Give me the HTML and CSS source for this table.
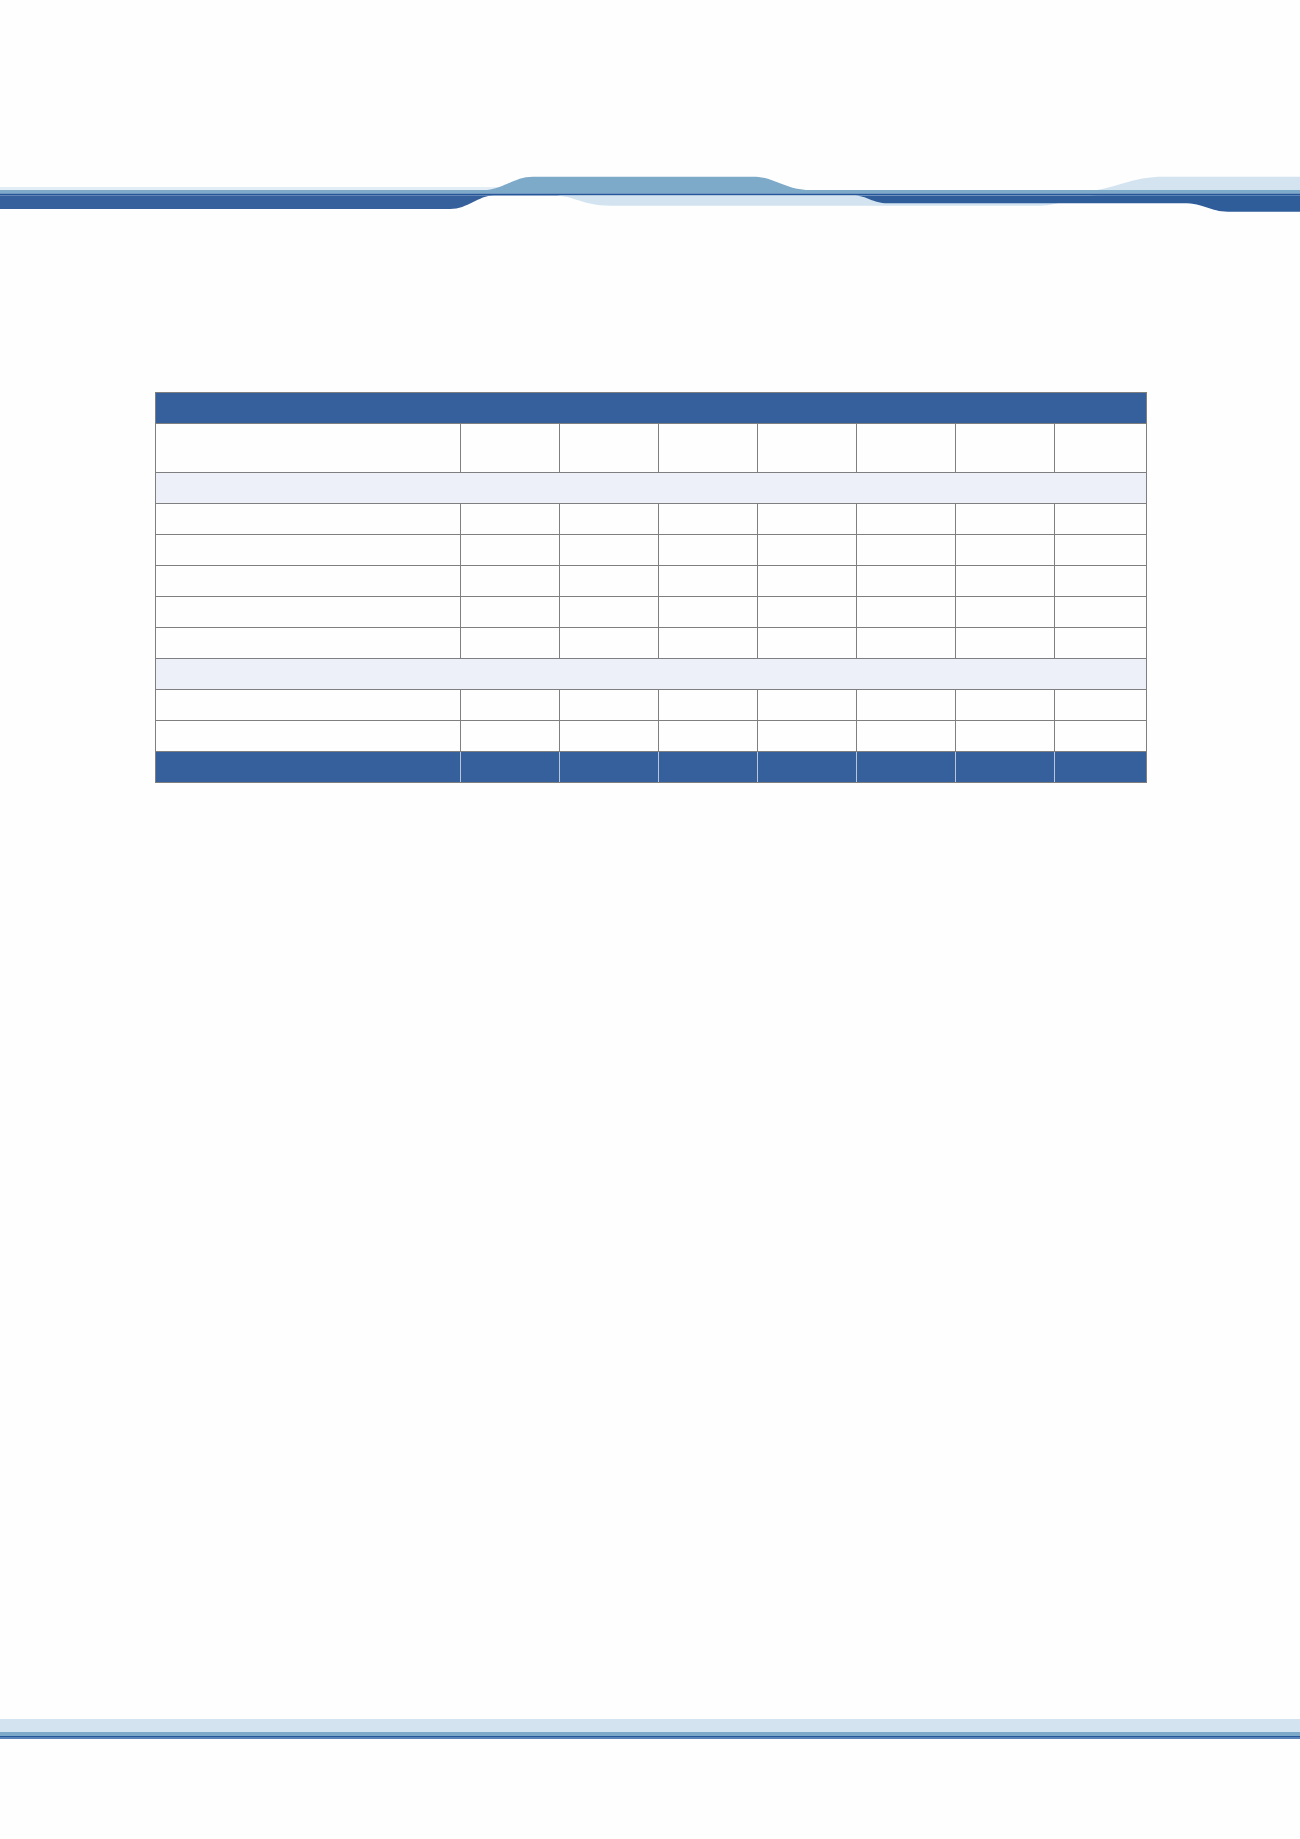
FILE: index.html
```html
<!DOCTYPE html>
<html lang="en">
<head>
<meta charset="utf-8">
<title>Report</title>
<link rel="stylesheet" href="styles.css">
</head>
<body>
<div class="page">
  <header class="masthead">
    <svg class="waves" width="1300" height="42" viewBox="0 0 1300 42" xmlns="http://www.w3.org/2000/svg">
      <rect x="0" y="15" width="520" height="3.5" fill="#e3edf5"/>
      <path d="M1097,18 C1120,14 1135,4.7 1163,4.7 H1300 V18 Z" fill="#d3e4f0"/>
      <path d="M0,18 H487 C505,16 515,4.7 533,4.7 H753 C775,4.7 785,18 810,18 H1300 V21.5 H0 Z" fill="#7eaaca"/>
      <rect x="0" y="21.5" width="1300" height="2" fill="#245799"/>
      <path d="M553,23.5 C575,23.5 582,33.7 610,33.7 H1040 C1060,33.7 1075,23.5 1097,23.5 Z" fill="#d3e4f0"/>
      <path d="M0,23.5 H494 C478,23.5 468,37 450,37 H0 Z" fill="#35609b"/>
      <path d="M853,23.5 C868,23.5 872,31.3 888,31.3 H1183 C1205,31.3 1210,39.7 1228,39.7 H1300 V23.5 Z" fill="#2f5d9a"/>
    </svg>
  </header>

  <main class="content">
    <table class="report">
      <colgroup>
        <col class="c-label">
        <col class="c-num"><col class="c-num"><col class="c-num"><col class="c-num"><col class="c-num"><col class="c-num">
        <col class="c-last">
      </colgroup>
      <tr class="r-title"><td colspan="8"></td></tr>
      <tr class="r-head"><td></td><td></td><td></td><td></td><td></td><td></td><td></td><td></td></tr>
      <tr class="r-section"><td colspan="8"></td></tr>
      <tr class="r-data"><td></td><td></td><td></td><td></td><td></td><td></td><td></td><td></td></tr>
      <tr class="r-data"><td></td><td></td><td></td><td></td><td></td><td></td><td></td><td></td></tr>
      <tr class="r-data"><td></td><td></td><td></td><td></td><td></td><td></td><td></td><td></td></tr>
      <tr class="r-data"><td></td><td></td><td></td><td></td><td></td><td></td><td></td><td></td></tr>
      <tr class="r-data"><td></td><td></td><td></td><td></td><td></td><td></td><td></td><td></td></tr>
      <tr class="r-section"><td colspan="8"></td></tr>
      <tr class="r-data"><td></td><td></td><td></td><td></td><td></td><td></td><td></td><td></td></tr>
      <tr class="r-data"><td></td><td></td><td></td><td></td><td></td><td></td><td></td><td></td></tr>
      <tr class="r-total"><td></td><td></td><td></td><td></td><td></td><td></td><td></td><td></td></tr>
    </table>
  </main>

  <footer class="foot">
    <div class="band-light"></div>
    <div class="band-mid"></div>
    <div class="band-dark"></div>
    <div class="band-low"></div>
  </footer>
</div>
</body>
</html>
```

FILE: styles.css
```css
html, body {
  margin: 0;
  padding: 0;
  background: #fefefe;
  font-family: "Liberation Sans", Arial, sans-serif;
}

.page {
  width: 1300px;
  height: 1839px;
  display: flex;
  flex-direction: column;
}

.masthead {
  padding-top: 172px;
  height: 42px;
}

.waves {
  display: block;
}

.content {
  padding: 178px 0 0 155px;
  flex: 1;
}

.report {
  border-collapse: collapse;
  table-layout: fixed;
  width: 991px;
  border: 1px solid #7f7f7f;
}

.c-label { width: 305px; }
.c-num { width: 99px; }
.c-last { width: 92px; }

.report td {
  padding: 0;
  border: 1px solid #7f7f7f;
  height: 30px;
  background: #fefefe;
}

.r-title td {
  background: #35609b;
}

.r-head td {
  height: 48px;
}

.r-section td {
  background: #edf0f8;
}

.r-total td {
  background: #35609b;
  border-left-color: #b9c6da;
  border-right-color: #b9c6da;
}

.r-total td:first-child {
  border-left-color: #7f7f7f;
}

.r-total td:last-child {
  border-right-color: #7f7f7f;
}

.foot {
  margin-bottom: 100px;
}

.band-light { height: 13px; background: #d3e4f0; }
.band-mid { height: 4px; background: #7eaaca; }
.band-dark { height: 1px; background: #245799; }
.band-low { height: 2px; background: #5a83b8; }
```
